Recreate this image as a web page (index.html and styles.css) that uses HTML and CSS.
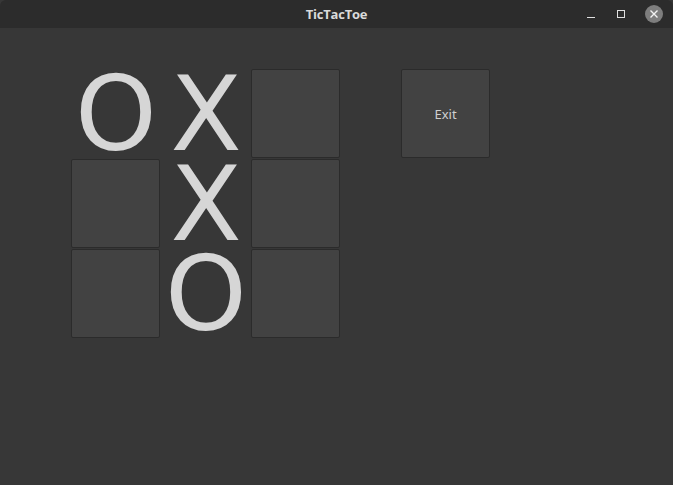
FILE: index.html
```html
<!DOCTYPE html>
<html>
<head>
<meta charset="utf-8">
<title>TicTacToe</title>
<link rel="stylesheet" href="styles.css">
</head>
<body>
<div class="window">
  <header class="titlebar">
    <span class="title">TicTacToe</span>
    <div class="controls">
      <svg class="ctl" width="12" height="12" viewBox="0 0 12 12"><line x1="2" y1="9.5" x2="10" y2="9.5" stroke="#e0e0e0" stroke-width="1"/></svg>
      <svg class="ctl" width="12" height="12" viewBox="0 0 12 12"><rect x="2.5" y="2.5" width="7" height="7" fill="none" stroke="#e0e0e0" stroke-width="1"/></svg>
      <svg class="ctl close" width="18" height="18" viewBox="0 0 18 18"><circle cx="9" cy="9" r="9" fill="#7e7e7e"/><path d="M5.5 5.5 L12.5 12.5 M12.5 5.5 L5.5 12.5" stroke="#f2f2f2" stroke-width="1.4"/></svg>
    </div>
  </header>
  <main class="content">
    <div class="board">
      <div class="slot"><span class="mark">O</span></div>
      <div class="slot"><span class="mark">X</span></div>
      <div class="slot"><button class="cell"></button></div>
      <div class="slot"><button class="cell"></button></div>
      <div class="slot"><span class="mark">X</span></div>
      <div class="slot"><button class="cell"></button></div>
      <div class="slot"><button class="cell"></button></div>
      <div class="slot"><span class="mark">O</span></div>
      <div class="slot"><button class="cell"></button></div>
    </div>
    <div class="slot exit-slot"><button class="cell exit">Exit</button></div>
  </main>
</div>
</body>
</html>
```
FILE: styles.css
```css
html, body {
  margin: 0;
  padding: 0;
  background: #373737;
}
.window {
  width: 673px;
  height: 485px;
  background: #373737;
  display: flex;
  flex-direction: column;
}
.titlebar {
  height: 28px;
  background: #2c2c2c;
  border-radius: 6px 6px 0 0;
  display: flex;
  align-items: center;
  justify-content: center;
  position: relative;
}
.title {
  font-family: "Open Sans", "DejaVu Sans", sans-serif;
  font-weight: 700;
  font-size: 13px;
  color: #dadada;
  letter-spacing: -0.2px;
}
.controls {
  position: absolute;
  right: 10px;
  top: 5px;
  display: flex;
  align-items: center;
  gap: 18px;
}
.ctl { display: block; }
.content {
  display: flex;
  align-items: flex-start;
  padding: 40px 0 0 71px;
  gap: 60px;
}
.board {
  display: grid;
  grid-template-columns: repeat(3, 90px);
  grid-template-rows: repeat(3, 90px);
}
.slot {
  width: 90px;
  height: 90px;
  display: flex;
  align-items: center;
  justify-content: center;
}
.mark {
  font-family: "DejaVu Sans", sans-serif;
  font-size: 104px;
  line-height: 86px;
  color: #d6d6d6;
  position: relative;
  top: 1px;
}
.cell {
  width: 89px;
  height: 89px;
  margin: 1px 1px 0 0;
  box-sizing: border-box;
  background: #424242;
  border: 1px solid #2b2b2b;
  border-radius: 2px;
  padding: 0;
}
.exit {
  font-family: "Noto Sans", "DejaVu Sans", sans-serif;
  font-size: 13px;
  color: #d0d0d0;
}
```
